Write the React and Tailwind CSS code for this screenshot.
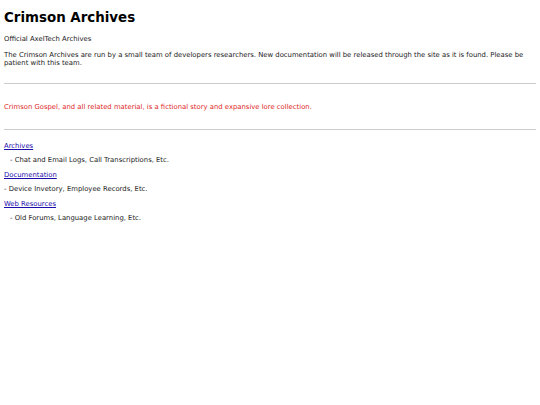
import React from "react";

const links = [
  { label: "Archives", desc: "- Chat and Email Logs, Call Transcriptions, Etc.", indent: true },
  { label: "Documentation", desc: "- Device Invetory, Employee Records, Etc.", indent: false },
  { label: "Web Resources", desc: "- Old Forums, Language Learning, Etc.", indent: true },
];

const App = () => {
  return (
    <div className="min-h-screen bg-white px-[4px] text-[6.85px] text-[#1a1a1a]" style={{ fontFamily: '"DejaVu Sans", Verdana, sans-serif' }}>
      <h1 className="pt-[8px] text-[13.4px] font-bold leading-[20px] text-black">Crimson Archives</h1>
      <p className="mt-[6px] leading-[10px]">Official AxelTech Archives</p>
      <p className="mt-[7px] pr-[6px] leading-[8px]">
        The Crimson Archives are run by a small team of developers researchers. New documentation will be released through the site as it is found. Please be patient with this team.
      </p>

      <hr className="mt-[16px] border-t border-[#cccccc]" />
      <p className="mt-[18px] leading-[10px] text-[#e02828]">
        Crimson Gospel, and all related material, is a fictional story and expansive lore collection.
      </p>
      <hr className="mt-[17px] border-t border-[#cccccc]" />

      <div className="mt-[8.5px] flex flex-col">
        {links.map((l) => (
          <div key={l.label} className="flex flex-col">
            <a href="#" className="self-start leading-[14.6px] text-[#1a0dab] underline">{l.label}</a>
            <p className={l.indent ? "pl-[6px] leading-[14.6px]" : "leading-[14.6px]"}>{l.desc}</p>
          </div>
        ))}
      </div>
    </div>
  );
};

export default App;
